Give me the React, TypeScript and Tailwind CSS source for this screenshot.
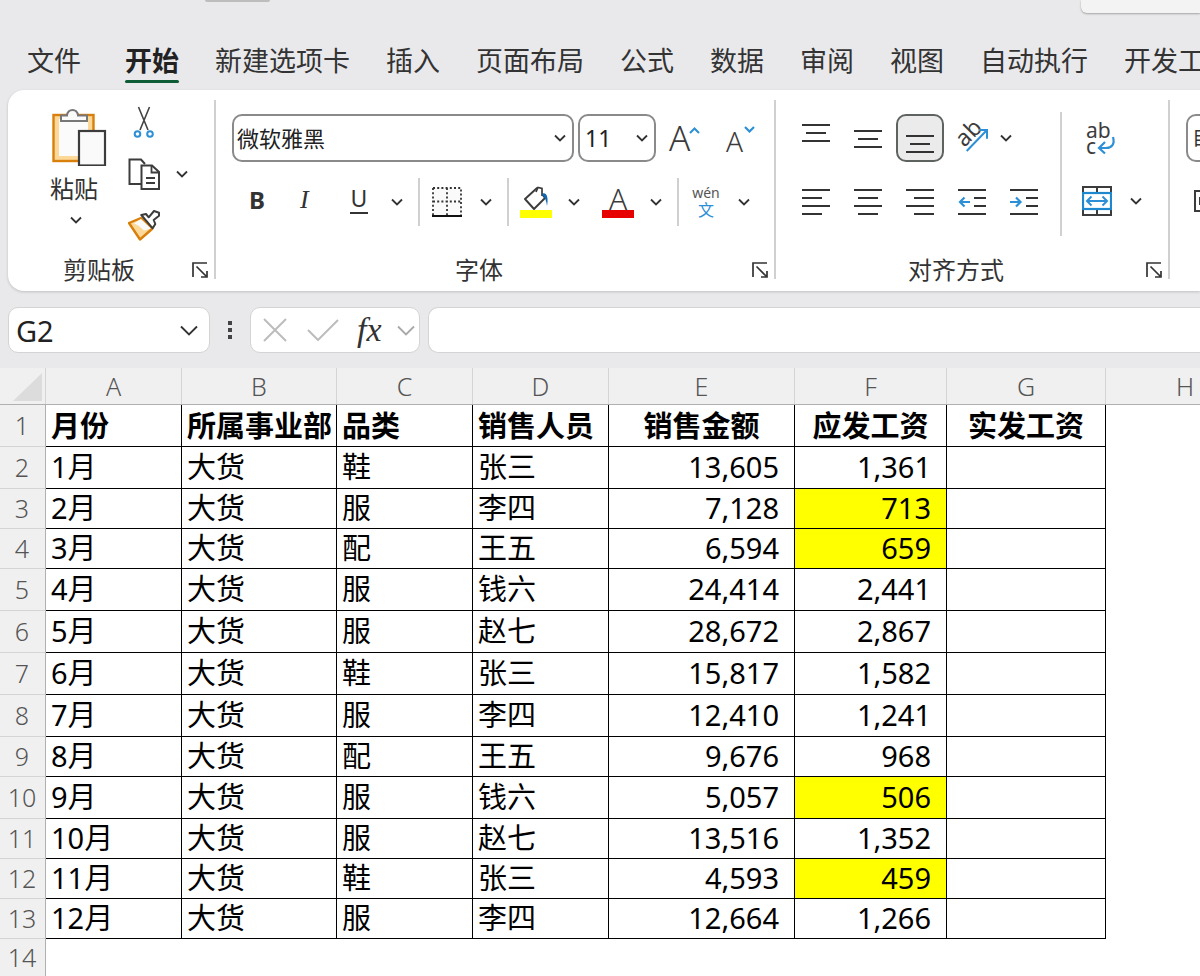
const tabs = ["文件", "开始", "新建选项卡", "插入", "页面布局", "公式", "数据", "审阅", "视图", "自动执行", "开发工具"];

const columns = [
  { name: "A", width: "w-[136px]" },
  { name: "B", width: "w-[155px]" },
  { name: "C", width: "w-[136px]" },
  { name: "D", width: "w-[136px]" },
  { name: "E", width: "w-[186px]" },
  { name: "F", width: "w-[152px]" },
  { name: "G", width: "w-[159px]" },
];

const rows = [
  { h: "h-[42px] leading-[40px]", cells: ["1月", "大货", "鞋", "张三", "13,605", "1,361"] },
  { h: "h-[40px] leading-[38px]", cells: ["2月", "大货", "服", "李四", "7,128", "713"], mark: true },
  { h: "h-[40px] leading-[38px]", cells: ["3月", "大货", "配", "王五", "6,594", "659"], mark: true },
  { h: "h-[42px] leading-[40px]", cells: ["4月", "大货", "服", "钱六", "24,414", "2,441"] },
  { h: "h-[42px] leading-[40px]", cells: ["5月", "大货", "服", "赵七", "28,672", "2,867"] },
  { h: "h-[42px] leading-[40px]", cells: ["6月", "大货", "鞋", "张三", "15,817", "1,582"] },
  { h: "h-[42px] leading-[40px]", cells: ["7月", "大货", "服", "李四", "12,410", "1,241"] },
  { h: "h-[40px] leading-[38px]", cells: ["8月", "大货", "配", "王五", "9,676", "968"] },
  { h: "h-[42px] leading-[40px]", cells: ["9月", "大货", "服", "钱六", "5,057", "506"], mark: true },
  { h: "h-[40px] leading-[38px]", cells: ["10月", "大货", "服", "赵七", "13,516", "1,352"] },
  { h: "h-[40px] leading-[38px]", cells: ["11月", "大货", "鞋", "张三", "4,593", "459"], mark: true },
  { h: "h-[40px] leading-[38px]", cells: ["12月", "大货", "服", "李四", "12,664", "1,266"] },
];

const headers = ["月份", "所属事业部", "品类", "销售人员", "销售金额", "应发工资", "实发工资"];

function Chevron({ className = "" }: { className?: string }) {
  return (
    <svg width="12" height="8" viewBox="0 0 12 8" fill="none" className={className}>
      <path d="M1 1.500 6 6.500 11 1.500" stroke="#333" strokeWidth="1.800" />
    </svg>
  );
}

function Launcher() {
  return (
    <svg width="16" height="16" viewBox="0 0 16 16" fill="none" className="mr-[6px] shrink-0">
      <path d="M1 15V1H15M15 9V15H9M4.500 4.500 14 14" stroke="#333" strokeWidth="1.700" />
    </svg>
  );
}

function Lines({ w = 28, lines }: { w?: number; lines: [number, number, number][] }) {
  const h = Math.max(...lines.map((l) => l[2])) + 2;
  return (
    <svg width={w} height={h} viewBox={`0 0 ${w} ${h}`}>
      {lines.map(([x1, x2, y], i) => (
        <path key={i} d={`M${x1} ${y + 1}H${x2}`} stroke="#333" strokeWidth="2" />
      ))}
    </svg>
  );
}

function AlignCell({ children }: { children: React.ReactNode }) {
  return <div className="flex h-[48px] w-[52px] items-center justify-center">{children}</div>;
}

function Separator({ className = "" }: { className?: string }) {
  return <div className={`w-[2px] shrink-0 bg-[#d0d0d0] ${className}`} />;
}

function ClipboardGroup() {
  return (
    <div className="flex w-[206px] shrink-0 flex-col">
      <div className="flex h-[168px] pl-[42px] pt-[16px]">
        <div className="flex w-[72px] flex-col">
          <svg width="64" height="60" viewBox="0 0 64 60" fill="none">
            <rect x="3.500" y="9" width="40" height="46" fill="#fcd999" stroke="#d97f0c" strokeWidth="2.400" />
            <rect x="9" y="13" width="29" height="37" fill="#fbfbfb" />
            <path d="M11 15V9.500H17C17.500 2 27.500 2 28 9.500H37V15Z" fill="#fafafa" stroke="#777" strokeWidth="2" />
            <rect x="29" y="25" width="26" height="34.500" fill="#fafafa" stroke="#3c3c3c" strokeWidth="2.200" />
          </svg>
          <span className="mt-[8px] w-[48px] text-center text-[24px] leading-[30px] text-[#333]">粘贴</span>
          <Chevron className="ml-[20px] mt-[12px]" />
        </div>
        <div className="flex flex-col pl-[6px]">
          <svg width="32" height="32" viewBox="0 0 32 32" fill="none">
            <path d="M12 24 21.500 1M20 24 10.500 1" stroke="#444" strokeWidth="1.600" />
            <circle cx="9.500" cy="28" r="2.800" stroke="#2d8fd5" strokeWidth="2" fill="#fff" />
            <circle cx="22" cy="28" r="2.800" stroke="#2d8fd5" strokeWidth="2" fill="#fff" />
          </svg>
          <div className="mt-[20px] flex items-center">
            <svg width="32" height="32" viewBox="0 0 32 32" fill="none">
              <path d="M13 26H1.500V1.500H13L17 6" stroke="#3c3c3c" strokeWidth="2" />
              <path d="M13.500 7.500H24L31 14V31H13.500Z" fill="#fff" stroke="#3c3c3c" strokeWidth="2" />
              <path d="M23.500 7.500V14.500H31M18 20H27M18 25H27" stroke="#3c3c3c" strokeWidth="1.800" />
            </svg>
            <Chevron className="ml-[16px]" />
          </div>
          <svg width="32" height="31" viewBox="0 0 32 31" fill="none" className="mt-[20px]">
            <path d="M1 13 13 8 24 19 12 29.500Z" fill="#fcd999" stroke="#d97f0c" strokeWidth="2.400" strokeLinejoin="round" />
            <path d="M6 13.500 13 9 23 18.500 16 20.500C12.500 17 10 15 6 13.500Z" fill="#fafafa" />
            <path d="M13.300 5 18 4 20.700 7.300 26 1 31 2.700V5.700L25.700 10 27.300 14 24.700 18.300Z" fill="#fff" stroke="#3c3c3c" strokeWidth="2" strokeLinejoin="round" />
          </svg>
        </div>
      </div>
      <div className="flex h-[24px] items-center">
        <span className="flex-1 pr-[2px] text-center text-[24px] text-[#333]">剪贴板</span>
        <Launcher />
      </div>
    </div>
  );
}

function FontGroup() {
  return (
    <div className="flex w-[558px] shrink-0 flex-col">
      <div className="flex h-[168px] flex-col pl-[16px] pt-[24px]">
        <div className="flex h-[48px] items-center">
          <div className="flex h-[48px] w-[342px] items-center justify-between rounded-[10px] border-2 border-[#8a8a8a] pl-[3px] pr-[6px]">
            <span className="text-[22px] text-[#222]">微软雅黑</span>
            <Chevron />
          </div>
          <div className="ml-[4px] flex h-[48px] w-[78px] items-center justify-between rounded-[10px] border-2 border-[#8a8a8a] pl-[5px] pr-[6px]">
            <span className="text-[23px] text-[#222]">11</span>
            <Chevron />
          </div>
          <div className="ml-[13px] flex h-[48px] w-[34px] items-start">
            <span className="text-[35px] font-light leading-[48px] text-[#3c3c3c]">A</span>
            <svg width="11" height="7" viewBox="0 0 11 7" fill="none" className="mt-[13px] shrink-0 -ml-[1px]">
              <path d="M1 6 5.500 1.500 10 6" stroke="#2d8fd5" strokeWidth="2" />
            </svg>
          </div>
          <div className="ml-[23px] flex h-[48px] w-[32px] items-start">
            <span className="mt-[3px] text-[28px] font-light leading-[48px] text-[#3c3c3c]">A</span>
            <svg width="11" height="7" viewBox="0 0 11 7" fill="none" className="mt-[12px] shrink-0 ml-[1px]">
              <path d="M1 1 5.500 5.500 10 1" stroke="#2d8fd5" strokeWidth="2.200" />
            </svg>
          </div>
        </div>
        <div className="mt-[16px] flex h-[48px] items-center">
          <span className="-mt-[4px] ml-[17px] w-[31px] text-[24px] font-bold text-[#333]">B</span>
          <span className="-mt-[5px] ml-[20px] w-[28px] font-['Liberation_Serif',serif] text-[26px] italic text-[#333]">I</span>
          <div className="-mt-[6px] ml-[17px] flex w-[28px] flex-col items-center">
            <span className="text-[23px] leading-[28px] text-[#333]">U</span>
            <div className="h-[2px] w-[18px] bg-[#333]" />
          </div>
          <Chevron className="ml-[18px]" />
          <Separator className="ml-[15px] h-[48px]" />
          <svg width="30" height="30" viewBox="0 0 30 30" fill="none" className="ml-[12px]">
            <rect x="1" y="1" width="28" height="27" fill="#fafafa" />
            <path d="M1 1H29V28M1 1V28M15 1V28M1 14.500H29" stroke="#333" strokeWidth="1.800" strokeDasharray="2 2.200" />
            <path d="M0 29H30" stroke="#111" strokeWidth="2" />
          </svg>
          <Chevron className="ml-[18px]" />
          <Separator className="ml-[15px] h-[48px]" />
          <div className="ml-[11px] flex w-[32px] flex-col items-center">
            <svg width="28" height="24" viewBox="0 0 28 24" fill="none">
              <path d="M3 13 15 2 23 12 12 23Z" fill="#fff" stroke="#3c3c3c" strokeWidth="1.900" strokeLinejoin="round" />
              <path d="M14 6 16 1.500 20 2.500V10" fill="#fff" stroke="#3c3c3c" strokeWidth="1.700" />
              <path d="M20 9C21 6 24 7 25 10C26 14 25.500 17 25 20C24.500 15 23 11 20 9Z" fill="#1268b3" />
            </svg>
            <div className="h-[8px] w-[32px] bg-[#ffff00]" />
          </div>
          <Chevron className="ml-[16px]" />
          <div className="ml-[22px] flex w-[32px] flex-col items-center">
            <span className="h-[24px] text-[30px] font-light leading-[26px] text-[#3c3c3c]">A</span>
            <div className="h-[8px] w-[32px] bg-[#e60000]" />
          </div>
          <Chevron className="ml-[16px]" />
          <Separator className="ml-[15px] h-[48px]" />
          <div className="ml-[11px] flex w-[32px] flex-col items-center">
            <span className="h-[16px] text-[14px] leading-[16px] text-[#555]">wén</span>
            <span className="text-[16px] leading-[18px] text-[#2d8fd5]">文</span>
          </div>
          <Chevron className="ml-[16px]" />
        </div>
      </div>
      <div className="flex h-[24px] items-center">
        <span className="flex-1 pr-[10px] text-center text-[24px] text-[#333]">字体</span>
        <Launcher />
      </div>
    </div>
  );
}

function AlignGroup() {
  return (
    <div className="flex w-[392px] shrink-0 flex-col">
      <div className="flex h-[168px] pl-[14px] pt-[24px]">
        <div className="w-[270px]">
          <div className="flex h-[48px] items-center">
            <AlignCell>
              <div className="-mt-[10px]"><Lines lines={[[0, 28, 0], [4, 24, 8], [0, 28, 16]]} /></div>
            </AlignCell>
            <AlignCell>
              <div className="mt-[2px]"><Lines lines={[[0, 28, 0], [4, 24, 8], [0, 28, 16]]} /></div>
            </AlignCell>
            <AlignCell>
              <div className="flex h-[48px] w-[48px] items-end justify-center rounded-[10px] border-2 border-[#5f6360] bg-[#ebebeb] pb-[7px]">
                <Lines lines={[[0, 28, 0], [4, 24, 8], [0, 28, 16]]} />
              </div>
            </AlignCell>
            <AlignCell>
              <div className="relative h-[36px] w-[36px]">
                <span className="absolute left-[0px] top-[-1px] rotate-[-45deg] text-[23px] leading-[26px] text-[#3c3c3c]">ab</span>
                <svg width="36" height="36" viewBox="0 0 36 36" fill="none" className="absolute left-0 top-0">
                  <path d="M12.700 31 33 10M25 10H33V18.700" stroke="#2d8fd5" strokeWidth="2" />
                </svg>
              </div>
            </AlignCell>
            <Chevron className="ml-[2px]" />
          </div>
          <div className="mt-[16px] flex h-[48px] items-center">
            <AlignCell><Lines lines={[[0, 28, 0], [0, 20, 8], [0, 28, 16], [0, 20, 24]]} /></AlignCell>
            <AlignCell><Lines lines={[[0, 28, 0], [4, 24, 8], [0, 28, 16], [4, 24, 24]]} /></AlignCell>
            <AlignCell><Lines lines={[[0, 28, 0], [8, 28, 8], [0, 28, 16], [8, 28, 24]]} /></AlignCell>
            <AlignCell>
              <svg width="28" height="26" viewBox="0 0 28 26" fill="none">
                <path d="M0 1H28M16 9H28M16 17H28M0 25H28" stroke="#333" strokeWidth="2" />
                <path d="M12 13H2M6.500 8.500 2 13 6.500 17.500" stroke="#2d8fd5" strokeWidth="2.200" />
              </svg>
            </AlignCell>
            <AlignCell>
              <svg width="28" height="26" viewBox="0 0 28 26" fill="none">
                <path d="M0 1H28M16 9H28M16 17H28M0 25H28" stroke="#333" strokeWidth="2" />
                <path d="M0 13H10.500M6 8.500 10.500 13 6 17.500" stroke="#2d8fd5" strokeWidth="2.200" />
              </svg>
            </AlignCell>
          </div>
        </div>
        <Separator className="-mt-[2px] h-[124px]" />
        <div className="flex flex-col">
          <div className="relative ml-[24px] mt-[10px] flex h-[32px] w-[32px] flex-col">
            <span className="-mt-[2px] h-[16px] text-[21px] leading-[16px] text-[#3c3c3c]">ab</span>
            <span className="h-[16px] text-[21px] leading-[16px] text-[#3c3c3c]">c</span>
            <svg width="32" height="32" viewBox="0 0 32 32" fill="none" className="absolute left-0 top-0">
              <path d="M27 13C29 20 26 24 20 24H13M19 18 13 24 19 29.500" stroke="#2d8fd5" strokeWidth="2.200" />
            </svg>
          </div>
          <div className="ml-[20px] mt-[30px] flex items-center">
            <svg width="30" height="30" viewBox="0 0 30 30" fill="none">
              <path d="M1 6V1H29V6M1 24V29H29V24M15 1V6M15 24V29" stroke="#3c3c3c" strokeWidth="2" />
              <rect x="1" y="7" width="28" height="16" stroke="#1e88cf" strokeWidth="2.200" />
              <path d="M5 15H25M9.500 10.500 5 15 9.500 19.500M20.500 10.500 25 15 20.500 19.500" stroke="#2d8fd5" strokeWidth="2" />
            </svg>
            <Chevron className="ml-[18px]" />
          </div>
        </div>
      </div>
      <div className="flex h-[24px] items-center">
        <span className="flex-1 pr-[10px] text-center text-[24px] text-[#333]">对齐方式</span>
        <Launcher />
      </div>
    </div>
  );
}

function Ribbon() {
  return (
    <div className="ml-[8px] flex h-[201px] overflow-hidden rounded-l-[16px] bg-white shadow-[0_1px_3px_rgba(0,0,0,0.18)]">
      <ClipboardGroup />
      <Separator className="mt-[10px] h-[179px]" />
      <FontGroup />
      <Separator className="mt-[10px] h-[179px]" />
      <AlignGroup />
      <Separator className="mt-[10px] h-[179px]" />
      <div className="flex flex-col pl-[16px] pt-[24px]">
        <div className="flex h-[48px] w-[40px] items-center overflow-hidden rounded-l-[10px] border-2 border-[#8a8a8a] pl-[4px] text-[20px] text-[#333]">自</div>
        <svg width="14" height="22" viewBox="0 0 14 22" fill="none" className="ml-[8px] mt-[28px]">
          <path d="M14 1H1V21H14M6 7V15" stroke="#3c3c3c" strokeWidth="2" />
        </svg>
      </div>
    </div>
  );
}

function FormulaBar() {
  return (
    <div className="mt-[16px] flex h-[46px] pl-[8px]">
      <div className="flex w-[202px] items-center justify-between rounded-[10px] border border-[#d4d4d4] bg-white pl-[7px] pr-[11px]">
        <span className="text-[29px] leading-none text-[#222]">G2</span>
        <svg width="18" height="11" viewBox="0 0 18 11" fill="none">
          <path d="M1 1.500 9 9.500 17 1.500" stroke="#333" strokeWidth="1.800" />
        </svg>
      </div>
      <div className="flex w-[40px] flex-col items-center justify-center gap-[3px]">
        <div className="h-[4px] w-[4px] bg-[#444]" />
        <div className="h-[4px] w-[4px] bg-[#444]" />
        <div className="h-[4px] w-[4px] bg-[#444]" />
      </div>
      <div className="flex w-[170px] items-center rounded-[10px] border border-[#d4d4d4] bg-white pl-[12px] pr-[4px]">
        <svg width="24" height="24" viewBox="0 0 24 24" fill="none">
          <path d="M1 1 23 23M23 1 1 23" stroke="#bcbcbc" strokeWidth="2" />
        </svg>
        <svg width="32" height="22" viewBox="0 0 32 22" fill="none" className="ml-[20px]">
          <path d="M1 11 11 21 31 1" stroke="#bcbcbc" strokeWidth="2" />
        </svg>
        <span className="ml-[18px] font-['Liberation_Serif',serif] text-[34px] italic leading-none text-[#333]">fx</span>
        <svg width="18" height="11" viewBox="0 0 18 11" fill="none" className="ml-auto">
          <path d="M1 1.500 9 9.500 17 1.500" stroke="#a8a8a8" strokeWidth="1.800" />
        </svg>
      </div>
      <div className="ml-[8px] flex-1 rounded-l-[10px] border border-r-0 border-[#d4d4d4] bg-white" />
    </div>
  );
}

function RowNumber({ n }: { n: number }) {
  return (
    <div className="flex w-[46px] shrink-0 items-center justify-center border-b border-r border-b-[#d4d4d4] border-r-[#b0b0b0] bg-[#f0f0f0] pr-[1px] text-[25px] font-light leading-none text-[#555]">
      {n}
    </div>
  );
}

function Sheet() {
  return (
    <div className="mt-[15px] bg-white">
      <div className="flex h-[37px] border-b border-[#b0b0b0] bg-[#f0f0f0]">
        <div className="flex w-[46px] shrink-0 items-end justify-end border-r border-[#d4d4d4] pb-[3px] pr-[3px]">
          <svg width="29" height="28" viewBox="0 0 29 28">
            <path d="M0 28 29 0V28Z" fill="#dcdcdc" />
          </svg>
        </div>
        {columns.map((c) => (
          <div key={c.name} className={`${c.width} shrink-0 border-r border-[#d4d4d4] pt-[1px] text-center text-[25px] font-light leading-[35px] text-[#555]`}>
            {c.name}
          </div>
        ))}
        <div className="w-[158px] shrink-0 pt-[1px] text-center text-[25px] font-light leading-[35px] text-[#555]">H</div>
      </div>
      <div className="flex h-[42px]">
        <RowNumber n={1} />
        {headers.map((h, i) => (
          <div
            key={h}
            className={`${columns[i].width} shrink-0 border-b border-r border-black text-[29px] font-bold leading-[42px] text-black ${i >= 4 ? "text-center" : "pl-[5px]"}`}
          >
            {h}
          </div>
        ))}
      </div>
      {rows.map((r, i) => (
        <div key={i} className={`flex ${r.h}`}>
          <RowNumber n={i + 2} />
          {r.cells.map((text, j) => (
            <div
              key={j}
              className={`${columns[j].width} shrink-0 border-b border-r border-black text-[29px] text-black ${j >= 4 ? "pr-[15px] text-right" : "pl-[5px]"} ${j === 5 && r.mark ? "bg-[#ffff00]" : ""}`}
            >
              {text}
            </div>
          ))}
          <div className={`${columns[6].width} shrink-0 border-b border-r border-black`} />
        </div>
      ))}
      <div className="flex h-[38px]">
        <RowNumber n={14} />
      </div>
    </div>
  );
}

export default function App() {
  return (
    <div className="h-[976px] w-[1200px] overflow-hidden bg-[#e9e9ec] font-['Noto_Sans','Noto_Sans_CJK_SC',sans-serif]">
      <div className="flex h-[13px] items-start">
        <div className="ml-[205px] h-[2px] w-[65px] rounded-b-full bg-[#bdbdbd]" />
        <div className="ml-auto h-[13px] w-[119px] rounded-bl-[6px] bg-[#f3f3f4] shadow-[0_1px_2px_rgba(0,0,0,0.3)]" />
      </div>
      <div className="flex h-[77px] items-start gap-[36px] whitespace-nowrap pl-[27px] pt-[29px]">
        {tabs.map((t) => (
          <div key={t} className={`flex shrink-0 flex-col ${t === "开始" ? "ml-[8px]" : ""}`}>
            <span className={`text-[27px] leading-[38px] ${t === "开始" ? "font-bold text-[#222]" : "text-[#333]"}`}>{t}</span>
            {t === "开始" && <div className="h-[3px] rounded-full bg-[#0e5c36]" />}
          </div>
        ))}
      </div>
      <Ribbon />
      <FormulaBar />
      <Sheet />
    </div>
  );
}
